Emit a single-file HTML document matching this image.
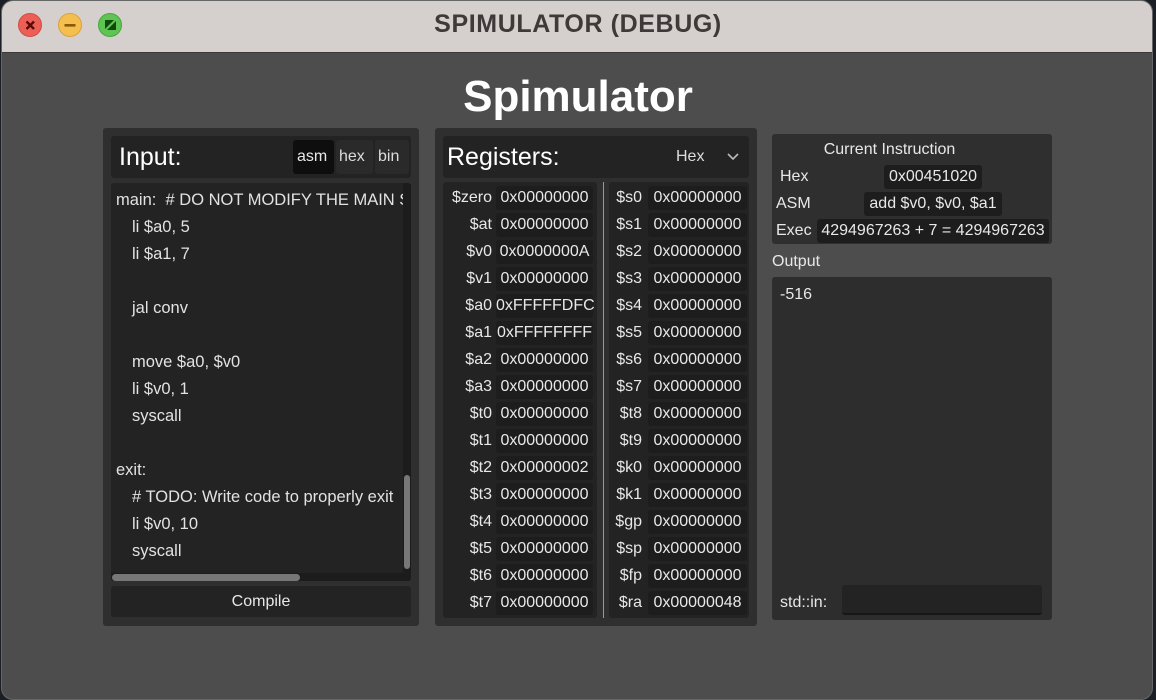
<!DOCTYPE html>
<html><head><meta charset="utf-8"><style>
*{box-sizing:border-box;margin:0;padding:0}
body{width:1156px;height:700px;background:#1b1e24;overflow:hidden;font-family:"Liberation Sans","DejaVu Sans",sans-serif;color:#e8e8e8;position:relative}
.win{position:absolute;left:1px;top:0;width:1152px;height:700px;background:#4d4d4d;border-radius:12px;overflow:hidden;border:1px solid #666}
.tb{position:absolute;left:0;top:0;width:100%;height:52px;background:#d5d0cd;border-bottom:1px solid #3a3a3a}
.dot{position:absolute;top:12px;width:24px;height:24px;border-radius:50%}
.t{position:absolute;white-space:nowrap}
.p{position:absolute;background:#2f2f2f;border-radius:3px}
.b{position:absolute;background:#232323;border-radius:3px}
.v{position:absolute;background:#1d1d1d;border-radius:3px;height:24px;font-size:16px;line-height:24px;text-align:center;white-space:nowrap}
.lbl{position:absolute;font-size:16px;line-height:24px;text-align:right}
.code{font-size:16.5px;color:#e2e2e2}
</style></head><body>
<div class="win">
 <div class="tb">
  <div class="dot" style="left:16px;background:#ec5f57;border:1px solid #d24c44"><svg width="24" height="24"><path d="M7.5 7.5L15 15M15 7.5L7.5 15" stroke="#5a0a06" stroke-width="2.4"/></svg></div>
  <div class="dot" style="left:56px;background:#f4bf4f;border:1px solid #d9a33a"><svg width="24" height="24"><path d="M5.5 11.3H16.5" stroke="#8a5a06" stroke-width="2.6"/></svg></div>
  <div class="dot" style="left:96px;background:#5fc454;border:1px solid #45a83b"><svg width="24" height="24"><path d="M6 6H15L6 15Z M17 7V16H8Z" fill="#0f4a0a"/></svg></div>
  <div class="t" style="left:0;width:1152px;text-align:center;top:9px;font-size:25px;font-weight:bold;color:#3d3a39;letter-spacing:0.6px">SPIMULATOR (DEBUG)</div>
 </div>
 <div class="t" style="left:0;width:1152px;text-align:center;top:71px;font-size:44px;font-weight:bold;color:#fff">Spimulator</div>

 <!-- Input panel -->
 <div class="p" style="left:101px;top:127px;width:316px;height:498px"></div>
 <div class="b" style="left:109px;top:135px;width:300px;height:42px"></div>
 <div class="t" style="left:117px;top:142px;font-size:25px;color:#fff">Input:</div>
 <div class="b" style="left:291px;top:139px;width:41px;height:34px;background:#0e0e0e"></div>
 <div class="t" style="left:295px;top:147px;font-size:16px">asm</div>
 <div class="b" style="left:334px;top:139px;width:37px;height:34px;background:#2a2a2a"></div>
 <div class="t" style="left:337px;top:147px;font-size:16px;color:#ddd">hex</div>
 <div class="b" style="left:373px;top:139px;width:34px;height:34px;background:#2a2a2a"></div>
 <div class="t" style="left:376px;top:147px;font-size:16px;color:#ddd">bin</div>
 <div class="b" style="left:109px;top:182px;width:300px;height:398px;overflow:hidden">
  <div class="t code" style="left:5px;top:8px">main:&nbsp; # DO NOT MODIFY THE MAIN S</div>
  <div class="t code" style="left:21px;top:35px">li $a0, 5</div>
  <div class="t code" style="left:21px;top:62px">li $a1, 7</div>
  <div class="t code" style="left:21px;top:116px">jal conv</div>
  <div class="t code" style="left:21px;top:170px">move $a0, $v0</div>
  <div class="t code" style="left:21px;top:197px">li $v0, 1</div>
  <div class="t code" style="left:21px;top:224px">syscall</div>
  <div class="t code" style="left:5px;top:278px">exit:</div>
  <div class="t code" style="left:21px;top:305px"># TODO: Write code to properly exit</div>
  <div class="t code" style="left:21px;top:332px">li $v0, 10</div>
  <div class="t code" style="left:21px;top:359px">syscall</div>
  <div style="position:absolute;left:292px;top:0;width:8px;height:398px;background:#1c1c1c"></div>
  <div style="position:absolute;left:293px;top:292px;width:6px;height:94px;background:#777;border-radius:3px"></div>
  <div style="position:absolute;left:0;top:390px;width:300px;height:8px;background:#1c1c1c"></div>
  <div style="position:absolute;left:1px;top:391px;width:188px;height:7px;background:#777;border-radius:4px"></div>
 </div>
 <div class="b" style="left:109px;top:585px;width:300px;height:31px;text-align:center;font-size:16px;line-height:31px">Compile</div>

 <!-- Registers -->
 <div class="p" style="left:433px;top:127px;width:322px;height:498px"></div>
 <div class="b" style="left:441px;top:135px;width:306px;height:42px"></div>
 <div class="t" style="left:445px;top:142px;font-size:25px;color:#fff">Registers:</div>
 <div class="t" style="left:674px;top:147px;font-size:16px;color:#ddd">Hex</div>
 <svg style="position:absolute;left:725px;top:151px" width="12" height="10"><path d="M1 2L6 7L11 2" stroke="#bbb" stroke-width="1.6" fill="none"/></svg>
 <div class="b" style="left:441px;top:181px;width:154px;height:436px"></div>
 <div class="b" style="left:607px;top:181px;width:140px;height:436px"></div>
 <div style="position:absolute;left:601px;top:181px;width:1px;height:436px;background:#999"></div>
 <div id="regs"></div>

 <!-- Current instruction -->
 <div class="p" style="left:770px;top:133px;width:280px;height:110px"></div>
 <div class="t" style="left:770px;width:235px;text-align:center;top:140px;font-size:16px">Current Instruction</div>
 <div class="t" style="left:778px;top:167px;font-size:16px">Hex</div>
 <div class="v" style="left:882px;top:164px;width:98px">0x00451020</div>
 <div class="t" style="left:774px;top:194px;font-size:16px">ASM</div>
 <div class="v" style="left:862px;top:191px;width:138px">add $v0, $v0, $a1</div>
 <div class="t" style="left:774px;top:221px;font-size:16px">Exec</div>
 <div class="v" style="left:815px;top:218px;width:232px">4294967263 + 7 = 4294967263</div>
 <div class="t" style="left:770px;top:252px;font-size:16px">Output</div>
 <div class="p" style="left:770px;top:276px;width:280px;height:343px;background:#2d2d2d"></div>
 <div class="t" style="left:778px;top:285px;font-size:16px">-516</div>
 <div class="t" style="left:778px;top:593px;font-size:16px">std::in:</div>
 <div class="b" style="left:840px;top:584px;width:200px;height:30px;border-bottom:2px solid #161616"></div>
</div>
<script>
var L=[["$zero","0x00000000"],["$at","0x00000000"],["$v0","0x0000000A"],["$v1","0x00000000"],["$a0","0xFFFFFDFC"],["$a1","0xFFFFFFFF"],["$a2","0x00000000"],["$a3","0x00000000"],["$t0","0x00000000"],["$t1","0x00000000"],["$t2","0x00000002"],["$t3","0x00000000"],["$t4","0x00000000"],["$t5","0x00000000"],["$t6","0x00000000"],["$t7","0x00000000"]];
var R=[["$s0","0x00000000"],["$s1","0x00000000"],["$s2","0x00000000"],["$s3","0x00000000"],["$s4","0x00000000"],["$s5","0x00000000"],["$s6","0x00000000"],["$s7","0x00000000"],["$t8","0x00000000"],["$t9","0x00000000"],["$k0","0x00000000"],["$k1","0x00000000"],["$gp","0x00000000"],["$sp","0x00000000"],["$fp","0x00000000"],["$ra","0x00000048"]];
var h="";
for(var i=0;i<16;i++){var y=185+27*i;
h+='<div class="lbl" style="left:441px;width:49px;top:'+y+'px">'+L[i][0]+'</div><div class="v" style="left:494px;width:97px;top:'+y+'px">'+L[i][1]+'</div>';
h+='<div class="lbl" style="left:609px;width:31px;top:'+y+'px">'+R[i][0]+'</div><div class="v" style="left:646px;width:99px;top:'+y+'px">'+R[i][1]+'</div>';}
document.getElementById("regs").outerHTML=h;
</script>
</body></html>
